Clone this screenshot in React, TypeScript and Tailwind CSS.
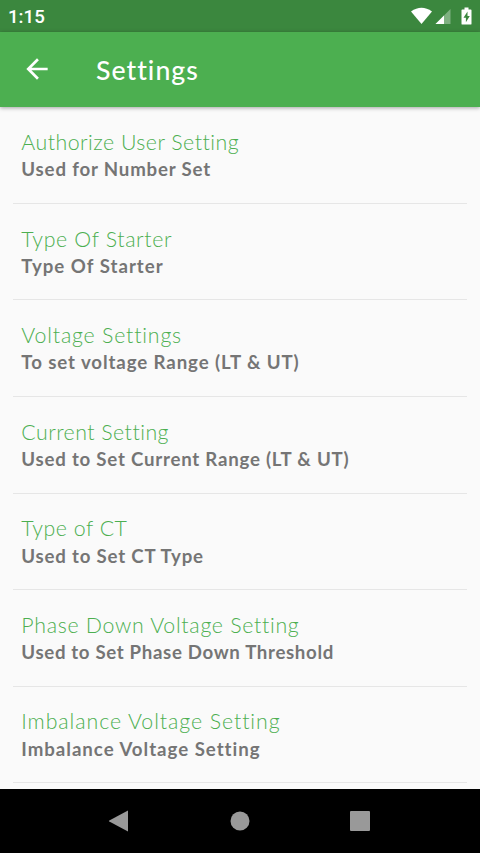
interface SettingItem {
  title: string
  subtitle: string
  titleClass: string
  subtitleClass: string
}

const settings: SettingItem[] = [
  { title: "Authorize User Setting", subtitle: "Used for Number Set", titleClass: "tracking-[0.48px]", subtitleClass: "tracking-[0.83px]" },
  { title: "Type Of Starter", subtitle: "Type Of Starter", titleClass: "tracking-[0.63px]", subtitleClass: "tracking-[1px]" },
  { title: "Voltage Settings", subtitle: "To set voltage Range (LT & UT)", titleClass: "tracking-[0.8px]", subtitleClass: "tracking-[0.9px]" },
  { title: "Current Setting", subtitle: "Used to Set Current Range (LT & UT)", titleClass: "tracking-[0.47px]", subtitleClass: "tracking-[0.77px]" },
  { title: "Type of CT", subtitle: "Used to Set CT Type", titleClass: "tracking-[0.52px]", subtitleClass: "tracking-[0.8px]" },
  { title: "Phase Down Voltage Setting", subtitle: "Used to Set Phase Down Threshold", titleClass: "tracking-[0.7px]", subtitleClass: "tracking-[0.66px]" },
  { title: "Imbalance Voltage Setting", subtitle: "Imbalance Voltage Setting", titleClass: "tracking-[0.92px]", subtitleClass: "tracking-[0.98px]" },
]

function StatusBar() {
  return (
    <div className="h-8 shrink-0 bg-[#3b873e] flex items-center justify-between pl-2 pr-2 text-white">
      <span className="font-['Roboto',sans-serif] font-medium text-[18.7px] leading-8 pt-0.5">1:15</span>
      <svg className="w-[62px] h-8" viewBox="0 0 62 32" fill="currentColor">
        <path d="M1 11.5Q11.5 4 22 11.5L11.5 24Z" />
        <path d="M40.5 9V24H25.5Z" opacity="0.35" />
        <path d="M34 15.5V24H25.5Z" />
        <path d="M54.500 7.5h4v2h2.200q.8 0 .8.8v13.400q0 .9-.8.9h-8.400q-.8 0-.8-.9V10.300q0-.8.8-.8h2.200Z" />
        <path d="M57.500 11.500L53.500 17.700h2.400v4.500L59.800 15.900h-2.300Z" fill="#3b873e" />
      </svg>
    </div>
  )
}

function AppBar() {
  return (
    <div className="relative h-[75px] shrink-0 bg-[#4caf50] flex items-center pb-px shadow-[0_1px_4px_rgba(0,0,0,0.35)]">
      <svg className="ml-[21px] w-8 h-8 text-white" viewBox="0 0 24 24" fill="currentColor">
        <path d="M20 11H7.83l5.59-5.59L12 4l-8 8 8 8 1.41-1.41L7.83 13H20v-2z" />
      </svg>
      <h1 className="ml-[43px] pt-px text-[26.67px] font-medium text-white tracking-[1.03px]">Settings</h1>
    </div>
  )
}

function SettingRow({ item }: { item: SettingItem }) {
  return (
    <li className="h-[96.55px] shrink-0 mx-[13.3px] pl-2 pt-[20.75px] border-b border-[#e6e6e6] whitespace-nowrap">
      <p className={`text-[21.33px] leading-[28px] font-light text-[#4caf50] ${item.titleClass}`}>{item.title}</p>
      <p className={`text-[18.67px] leading-[26px] pt-[0.25px] font-bold text-[#757575] ${item.subtitleClass}`}>{item.subtitle}</p>
    </li>
  )
}

function NavigationBar() {
  return (
    <div className="h-16 shrink-0 bg-black">
      <svg className="w-full h-16" viewBox="0 0 480 64" fill="#999999">
        <path d="M128 21.5V42.5L109.3 32.6q-1-.6 0-1.2Z" />
        <circle cx="240" cy="32" r="9.5" />
        <rect x="350" y="22" width="20" height="20" rx="1" />
      </svg>
    </div>
  )
}

export default function App() {
  return (
    <div className="w-[480px] h-[853px] flex flex-col overflow-hidden bg-[#fafafa] font-['Lato',sans-serif]">
      <StatusBar />
      <AppBar />
      <ul className="flex-1 min-h-0 flex flex-col overflow-hidden pt-[0.4px]">
        {settings.map((item) => (
          <SettingRow key={item.title} item={item} />
        ))}
      </ul>
      <NavigationBar />
    </div>
  )
}
